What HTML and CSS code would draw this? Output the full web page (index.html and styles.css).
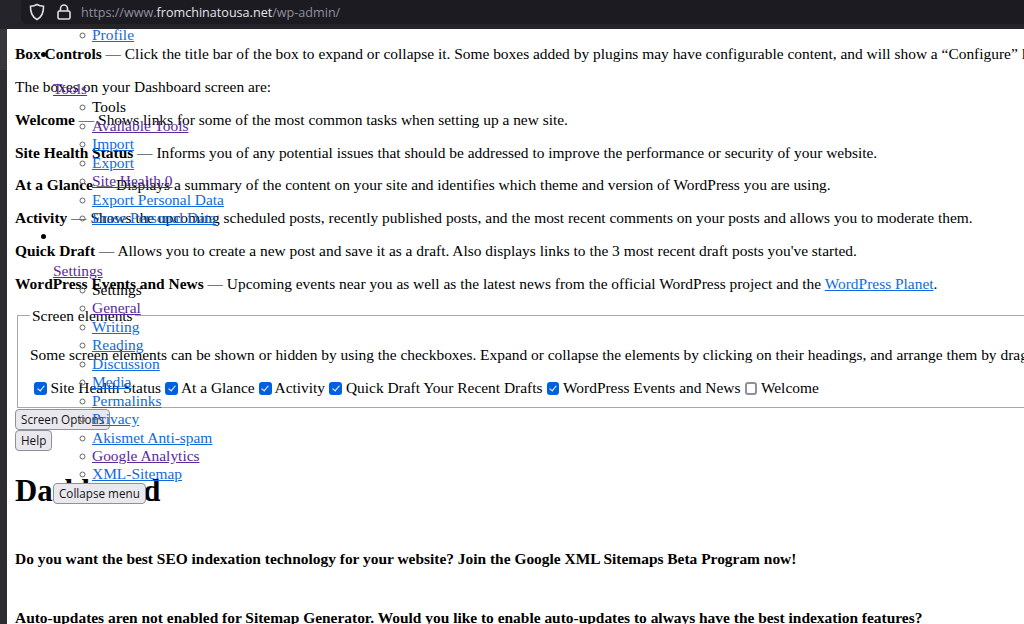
FILE: index.html
```html
<!DOCTYPE html>
<html lang="en">
  <head>
    <title>Dashboard</title>
    <meta charset="UTF-8" />
    <link rel="stylesheet" href="styles.css">
  </head>
  <body>
    <div class="topbar">
      <div class="urlbar">
        <svg class="icon-shield" width="16" height="18" viewBox="0 0 16 18">
          <path d="M8 1.5 C10 2.8 12.5 3.2 14.5 3.2 C14.7 9.5 12.5 14 8 16.5 C3.5 14 1.3 9.5 1.5 3.2 C3.5 3.2 6 2.8 8 1.5 Z" />
        </svg>
        <svg class="icon-lock" width="14" height="16" viewBox="0 0 14 16">
          <path d="M3.5 7 V4.5 a3.5 3.5 0 0 1 7 0 V7" />
          <rect x="1" y="7" width="12" height="8" rx="1.5" />
        </svg>
        <span class="url">https://www.<b>fromchinatousa.net</b>/wp-admin/</span>
      </div>
    </div>

    <div class="main">
      <div class="side-strip"></div>
      <div class="page">
        <div class="content">
          <p><strong>Box Controls</strong> — Click the title bar of the box to expand or collapse it. Some boxes added by plugins may have configurable content, and will show a “Configure” link in the title bar if you hover over it.</p>
          <p>The boxes on your Dashboard screen are:</p>
          <p><strong>Welcome</strong> — Shows links for some of the most common tasks when setting up a new site.</p>
          <p><strong>Site Health Status</strong> — Informs you of any potential issues that should be addressed to improve the performance or security of your website.</p>
          <p><strong>At a Glance</strong> — Displays a summary of the content on your site and identifies which theme and version of WordPress you are using.</p>
          <p><strong>Activity</strong> — Shows the upcoming scheduled posts, recently published posts, and the most recent comments on your posts and allows you to moderate them.</p>
          <p><strong>Quick Draft</strong> — Allows you to create a new post and save it as a draft. Also displays links to the 3 most recent draft posts you've started.</p>
          <p><strong>WordPress Events and News</strong> — Upcoming events near you as well as the latest news from the official WordPress project and the <a href="#">WordPress Planet</a>.</p>

          <fieldset class="screen-elements">
            <legend>Screen elements</legend>
            <p>Some screen elements can be shown or hidden by using the checkboxes. Expand or collapse the elements by clicking on their headings, and arrange them by dragging their headings or clicking on the up and down arrows.</p>
            <div class="checks">
              <label><input type="checkbox" checked /> Site Health Status</label>
              <label><input type="checkbox" checked /> At a Glance</label>
              <label><input type="checkbox" checked /> Activity</label>
              <label><input type="checkbox" checked /> Quick Draft Your Recent Drafts</label>
              <label><input type="checkbox" checked /> WordPress Events and News</label>
              <label><input type="checkbox" /> Welcome</label>
            </div>
          </fieldset>

          <div class="meta-buttons">
            <button>Screen Options</button>
            <button>Help</button>
          </div>

          <h1>Dashboard</h1>

          <div class="notice">
            <p><strong>Do you want the best SEO indexation technology for your website? Join the Google XML Sitemaps Beta Program now!</strong></p>
          </div>
          <div class="notice">
            <p><strong>Auto-updates aren not enabled for Sitemap Generator. Would you like to enable auto-updates to always have the best indexation features?</strong></p>
          </div>
        </div>

        <!-- the unstyled admin menu runs over the content -->
        <ul class="admin-menu">
          <li class="no-marker">
            <ul>
              <li><a href="#">Profile</a></li>
            </ul>
          </li>
          <li>
            <div class="menu-gap"></div>
            <a href="#" class="seen">Tools</a>
            <ul>
              <li>Tools</li>
              <li><a href="#" class="seen">Available Tools</a></li>
              <li><a href="#">Import</a></li>
              <li><a href="#">Export</a></li>
              <li><a href="#" class="seen">Site Health 0</a></li>
              <li><a href="#">Export Personal Data</a></li>
              <li><a href="#">Erase Personal Data</a></li>
            </ul>
          </li>
          <li>
            <div class="menu-gap"></div>
            <a href="#" class="seen">Settings</a>
            <ul>
              <li>Settings</li>
              <li><a href="#" class="seen">General</a></li>
              <li><a href="#">Writing</a></li>
              <li><a href="#">Reading</a></li>
              <li><a href="#">Discussion</a></li>
              <li><a href="#">Media</a></li>
              <li><a href="#">Permalinks</a></li>
              <li><a href="#">Privacy</a></li>
              <li><a href="#">Akismet Anti-spam</a></li>
              <li><a href="#" class="seen">Google Analytics</a></li>
              <li><a href="#">XML-Sitemap</a></li>
            </ul>
          </li>
          <li class="no-marker"><button>Collapse menu</button></li>
        </ul>
      </div>
    </div>
  </body>
</html>
```

FILE: styles.css
```css
html,
body {
  margin: 0;
  padding: 0;
  height: 100%;
  overflow: hidden;
  font-family: "Liberation Serif", serif;
  font-size: 15.43px;
  color: #000;
  background: #fff;
}

/* Browser chrome */
.topbar {
  height: 29px;
  background: #25242a;
}

.urlbar {
  display: flex;
  align-items: center;
  height: 24px;
  padding-left: 8px;
  margin-left: 21px;
  background: #1c1b22;
  border-bottom-left-radius: 6px;
}

.icon-shield {
  fill: none;
  stroke: #e0e0e6;
  stroke-width: 1.6;
  margin-right: 12px;
}

.icon-lock {
  fill: none;
  stroke: #e0e0e6;
  stroke-width: 1.6;
  margin-right: 10px;
}

.url {
  font-family: "Open Sans", sans-serif;
  font-size: 12.6px;
  color: #8f8f9d;
}

.url b {
  font-weight: 400;
  color: #e4e4ea;
}

/* Page */
.main {
  display: flex;
  height: 595px;
}

.side-strip {
  width: 7px;
  flex-shrink: 0;
  background: linear-gradient(#38373c 41px, #2d2c31 41px);
}

.page {
  position: relative;
  flex: 1;
  min-width: 0;
  overflow: hidden;
  background: #fff;
}

.content {
  width: 2000px;
  padding: 1px 8px 0;
}

p {
  margin: 16px 0;
  line-height: 16.85px;
}

a {
  color: #0f6bdc;
}

a.seen {
  color: #5a2a9c;
}

.screen-elements {
  margin: -2px 2px 1px;
  padding: 0 12px 11px;
  border: 1.5px solid #a8a8a8;
}

.screen-elements legend {
  padding: 0 2px;
  line-height: 17px;
}

.screen-elements p {
  margin: 23px 0 15px;
}

.checks {
  padding-left: 3.5px;
  line-height: 17px;
}

.checks input {
  appearance: none;
  position: relative;
  box-sizing: border-box;
  width: 12.6px;
  height: 13px;
  margin: 0 0 0 0.5px;
  vertical-align: -2px;
  background: #fff;
  border: 2px solid #8f8f9d;
  border-radius: 3px;
}

.checks input:checked {
  background: #0060df;
  border-color: #0060df;
}

.checks input:checked::before {
  content: "";
  position: absolute;
  left: 2.5px;
  top: 0;
  width: 3px;
  height: 6px;
  border: solid #fff;
  border-width: 0 1.6px 1.6px 0;
  transform: rotate(40deg);
}

.meta-buttons button {
  display: block;
}

button {
  font-family: "Open Sans", sans-serif;
  font-size: 11.7px;
  color: #15141a;
  height: 21px;
  padding: 0 5px;
  background: #e9e9ed;
  border: 1px solid #8f8f9d;
  border-radius: 4px;
}

h1 {
  font-size: 30.8px;
  line-height: 37px;
  margin: 22px 0 21px;
}

.notice {
  padding: 20px 0 0;
}

.notice p {
  margin: 0 0 23px;
}

/* Admin menu */
.admin-menu {
  position: absolute;
  left: 6px;
  top: -2.6px;
  margin: 0;
  padding-left: 44px;
  list-style: disc;
  line-height: 18.45px;
}

/* pulls the content back so the markers sit closer to it */
.admin-menu > li > * {
  margin-left: -4px;
}

.admin-menu ul {
  padding-left: 43px;
  margin-top: 0;
  margin-bottom: 0;
  list-style: circle;
}

.admin-menu ul li {
  text-indent: -4px;
}

.admin-menu ul li::marker {
  color: #666;
}

.no-marker {
  list-style: none;
}

.menu-gap {
  height: 35px;
}

.menu-gap::before {
  content: "\00a0";
}

.admin-menu button {
  display: block;
  margin-top: -1px;
}
```
